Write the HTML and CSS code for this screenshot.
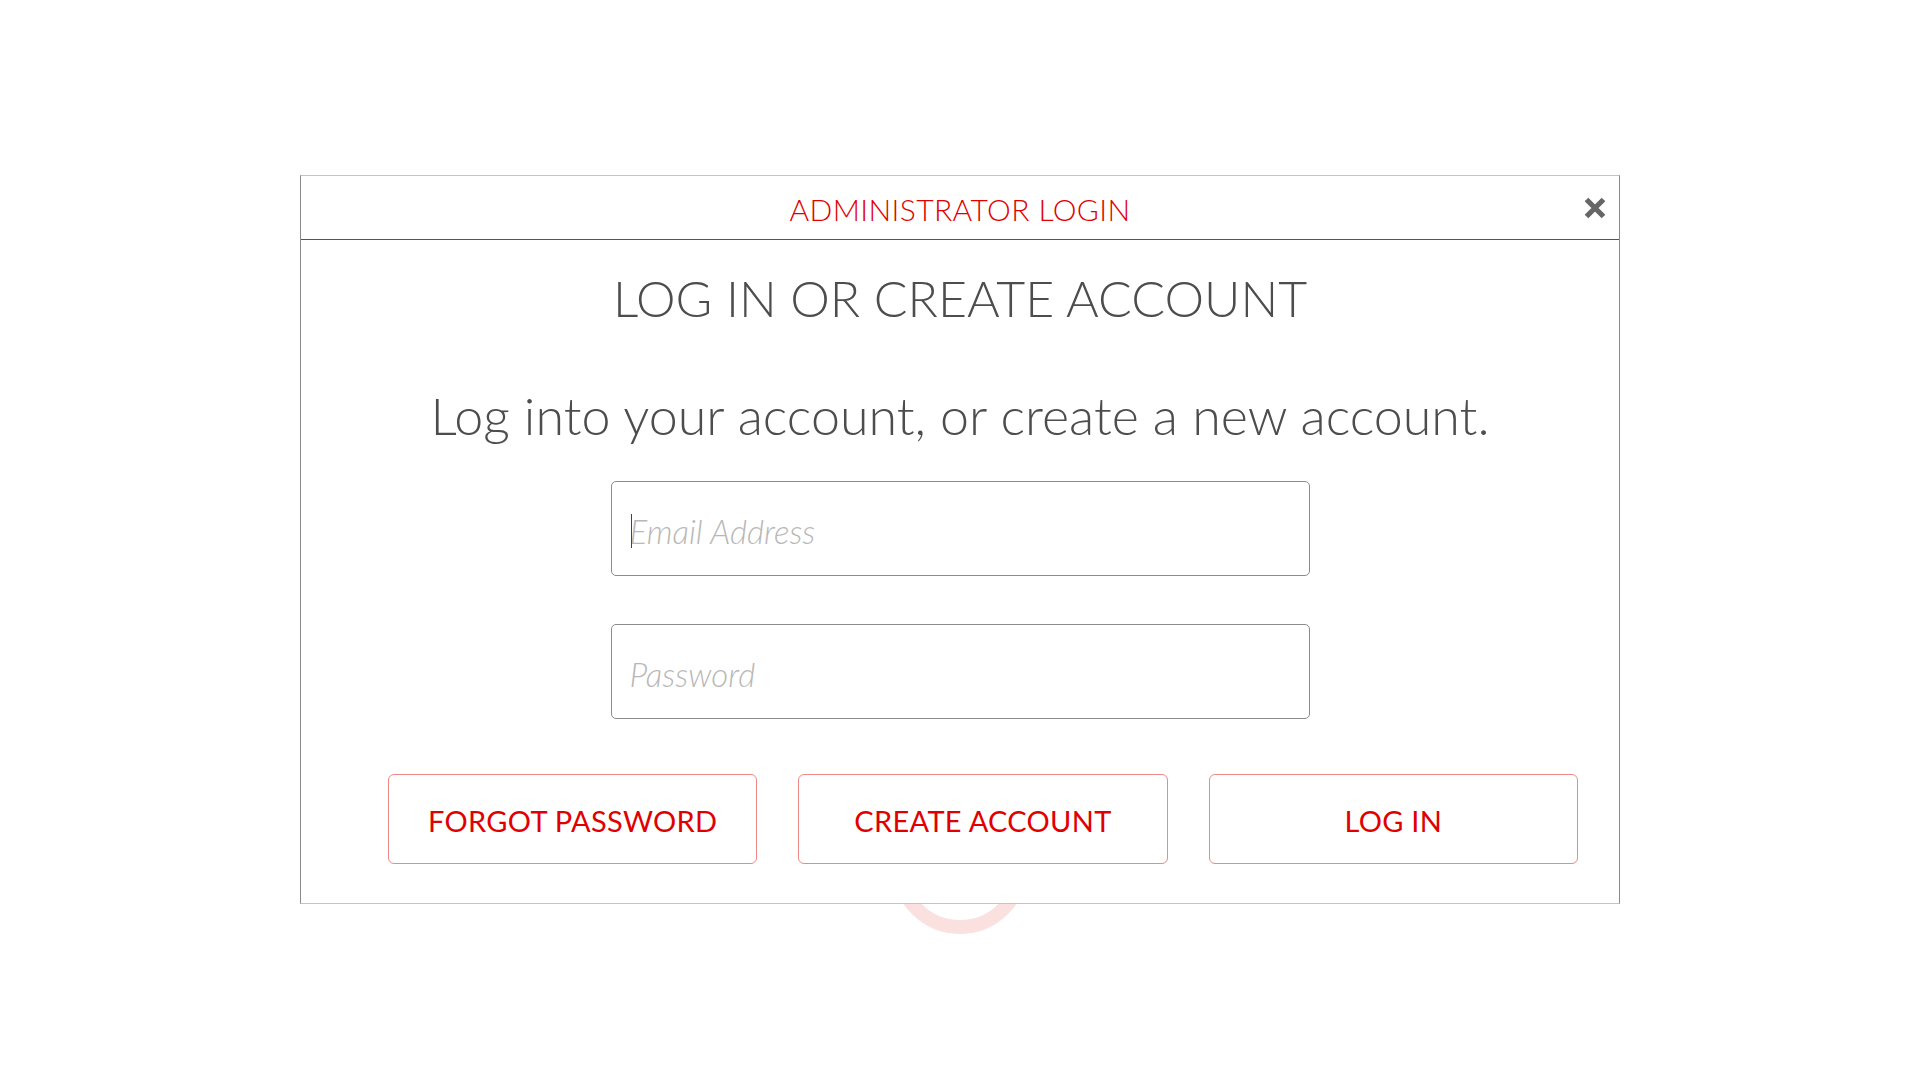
FILE: index.html
```html
<!DOCTYPE html>
<html lang="en">
<head>
<meta charset="utf-8">
<title>Administrator Login</title>
<link rel="stylesheet" href="styles.css">
</head>
<body>
<div class="spinner"></div>
<div class="dialog">
  <div class="dialog-header">
    <span class="dialog-title">ADMINISTRATOR LOGIN</span>
    <button class="close" aria-label="Close">
      <svg width="24" height="24" viewBox="0 0 24 24"><path d="M3.5 3.5 L20.5 20.5 M20.5 3.5 L3.5 20.5" stroke="#666" stroke-width="5.2" fill="none"/></svg>
    </button>
  </div>
  <div class="dialog-body">
    <h1 class="heading">LOG IN OR CREATE ACCOUNT</h1>
    <p class="subtitle">Log into your account, or create a new account.</p>
    <div class="field-wrap field-email">
      <input class="field" type="email" placeholder="Email Address">
      <span class="caret"></span>
    </div>
    <div class="field-wrap field-password">
      <input class="field" type="password" placeholder="Password">
    </div>
    <div class="actions">
      <button class="btn">FORGOT PASSWORD</button>
      <button class="btn">CREATE ACCOUNT</button>
      <button class="btn">LOG IN</button>
    </div>
  </div>
</div>
</body>
</html>
```
FILE: styles.css
```css
* { box-sizing: border-box; }
html, body {
  margin: 0;
  padding: 0;
  background: #fff;
  font-family: "Lato", "Open Sans", sans-serif;
}
body {
  position: relative;
  width: 1920px;
  height: 1080px;
  overflow: hidden;
  padding-top: 175px;
}
.spinner {
  position: absolute;
  left: 892px;
  top: 798px;
  width: 136px;
  height: 136px;
  border: 14px solid #fbe0e0;
  border-radius: 50%;
  z-index: 0;
}
.dialog {
  position: relative;
  z-index: 1;
  width: 1320px;
  margin: 0 auto;
  background: #fff;
  border: 1px solid #8a8a8a;
  border-top-color: #c4c4c4;
  border-bottom-color: #c4c4c4;
}
.dialog-header {
  position: relative;
  height: 64px;
  border-bottom: 1px solid #555;
  display: flex;
  align-items: center;
  justify-content: center;
}
.dialog-title {
  color: #e10000;
  font-size: 30px;
  font-weight: 300;
  letter-spacing: 0.4px;
  padding-top: 2px;
}
.close {
  position: absolute;
  right: 12px;
  top: 20px;
  width: 24px;
  height: 24px;
  padding: 0;
  border: 0;
  background: none;
  display: block;
}
.close svg { display: block; }
.dialog-body {
  display: flex;
  flex-direction: column;
  align-items: center;
  padding-top: 28px;
}
.heading {
  margin: 0;
  font-size: 50px;
  line-height: 60px;
  font-weight: 300;
  color: #4d4d4d;
  letter-spacing: 0;
}
.subtitle {
  margin: 55px 0 0;
  font-size: 52px;
  line-height: 64px;
  font-weight: 300;
  color: #4d4d4d;
}
.field-wrap {
  position: relative;
  width: 699px;
  height: 95px;
}
.field {
  display: block;
  width: 100%;
  height: 100%;
  border: 1px solid #8c8c8c;
  border-radius: 5px;
  padding: 4px 18px 0;
  font-family: "Lato", sans-serif;
  font-size: 33px;
  font-weight: 300;
  color: #333;
  outline: none;
  caret-color: #333;
}
.field::placeholder {
  color: #b8b8b8;
  font-style: italic;
  font-weight: 300;
}
.caret {
  position: absolute;
  left: 20px;
  top: 33px;
  width: 1px;
  height: 34px;
  background: #444;
}
.field-email { margin-top: 34px; }
.field-password { margin-top: 48px; }
.actions {
  align-self: stretch;
  display: flex;
  gap: 41px;
  padding: 55px 41px 39px 87px;
}
.btn {
  width: 370px;
  height: 90px;
  border: 1px solid #f08888;
  border-radius: 6px;
  background: #fff;
  color: #e10000;
  font-family: "Lato", sans-serif;
  font-size: 29px;
  font-weight: 400;
  letter-spacing: 0.3px;
  padding: 2px 0 0;
}
```
